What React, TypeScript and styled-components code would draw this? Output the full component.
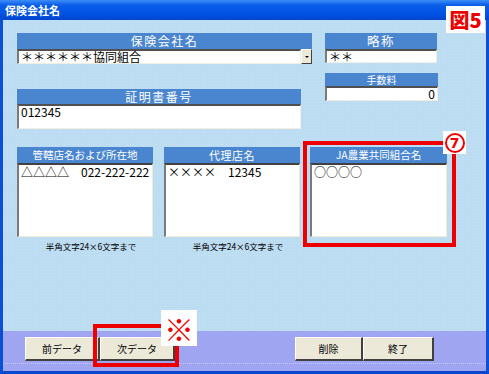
import styled, { createGlobalStyle } from 'styled-components';

const GlobalStyle = createGlobalStyle`
  html, body {
    margin: 0;
    padding: 0;
    background: #ffffff;
  }
  * {
    box-sizing: border-box;
  }
`;

const FONT = `"MS UI Gothic", "Noto Sans CJK JP", "DejaVu Sans", sans-serif`;

const Window = styled.div`
  position: relative;
  width: 489px;
  height: 374px;
  display: flex;
  flex-direction: column;
  font-family: ${FONT};
  overflow: hidden;
`;

const TitleBar = styled.div`
  height: 20px;
  flex-shrink: 0;
  display: flex;
  align-items: center;
  padding-left: 5px;
  color: #ffffff;
  font-size: 11px;
  font-weight: 700;
  background: linear-gradient(#3d8ef8 0%, #0a5ee8 25%, #0052e4 70%, #0445cc 100%);
`;

const Frame = styled.div`
  flex: 1;
  display: flex;
  flex-direction: column;
  border-left: 3px solid #0b4fd6;
  border-right: 3px solid #0b4fd6;
  border-bottom: 3px solid #0b47cc;
`;

const FormArea = styled.div`
  flex: 1;
  padding: 13px 0 0 14px;
  background-color: #bcdcf2;
  background-image: radial-gradient(#c6e2f6 0.6px, transparent 0.7px);
  background-size: 3px 3px;
`;

const TopSection = styled.div`
  display: flex;
  align-items: flex-start;
`;

const Column = styled.div<{ $width: number; $ml?: number }>`
  width: ${(p) => p.$width}px;
  margin-left: ${(p) => p.$ml ?? 0}px;
  display: flex;
  flex-direction: column;
`;

const Field = styled.div<{ $width?: number; $mt?: number }>`
  width: ${(p) => (p.$width ? `${p.$width}px` : '100%')};
  margin-top: ${(p) => p.$mt ?? 0}px;
  display: flex;
  flex-direction: column;
`;

const Header = styled.div<{ $h: number; $size?: number; $spacing?: number }>`
  height: ${(p) => p.$h}px;
  flex-shrink: 0;
  background: #4a86d0;
  color: #ffffff;
  font-size: ${(p) => p.$size ?? 12}px;
  line-height: ${(p) => p.$h}px;
  text-align: center;
  letter-spacing: ${(p) => p.$spacing ?? 1.5}px;
  white-space: nowrap;
`;

const InputRow = styled.div`
  display: flex;
`;

const Input = styled.div<{ $h: number; $align?: string }>`
  flex: 1 1 auto;
  height: ${(p) => p.$h}px;
  background: #ffffff;
  border-top: 2px solid #505050;
  border-left: 2px solid #7a7a7a;
  border-right: 1px solid #f2efe2;
  border-bottom: 1px solid #f2efe2;
  color: #000000;
  font-size: 12px;
  line-height: 11px;
  padding: 0 2px;
  text-align: ${(p) => p.$align ?? 'left'};
  white-space: nowrap;
`;

const DropButton = styled.div`
  width: 11px;
  height: 15px;
  flex-shrink: 0;
  background: #ece9d8;
  border: 1px solid #404040;
  border-top-color: #ffffff;
  border-left-color: #ffffff;
  display: flex;
  align-items: center;
  justify-content: center;
  &::after {
    content: '';
    border-left: 2px solid transparent;
    border-right: 2px solid transparent;
    border-top: 2px solid #000000;
  }
`;

const BoxRow = styled.div`
  display: flex;
  margin-top: 18px;
  align-items: flex-start;
`;

const BoxColumn = styled.div<{ $width: number; $ml?: number }>`
  width: ${(p) => p.$width}px;
  margin-left: ${(p) => p.$ml ?? 0}px;
  display: flex;
  flex-direction: column;
`;

const TextBox = styled.div`
  height: 74px;
  flex-shrink: 0;
  background: #ffffff;
  border-top: 2px solid #404040;
  border-left: 2px solid #7a7a7a;
  border-right: 1px solid #f0ecd8;
  border-bottom: 1px solid #f0ecd8;
  font-size: 12px;
  line-height: 12px;
  padding: 1px 2px;
  white-space: pre;
  color: #000000;
`;

const Note = styled.div`
  margin-top: 3px;
  padding-left: 12px;
  text-align: center;
  font-size: 8.5px;
  color: #000000;
  white-space: nowrap;
`;

const ButtonBar = styled.div`
  height: 40px;
  flex-shrink: 0;
  background: #a0a5f2;
  display: flex;
  flex-direction: column;
`;

const ButtonStrip = styled.div`
  height: 33px;
  padding: 6px 0 0 22px;
  display: flex;
  border-bottom: 1px dotted #c4c8fa;
`;

const Button = styled.div<{ $width: number; $ml?: number }>`
  width: ${(p) => p.$width}px;
  margin-left: ${(p) => p.$ml ?? 0}px;
  height: 24px;
  background: #ece9d8;
  border-top: 1px solid #ffffff;
  border-left: 1px solid #ffffff;
  border-right: 2px solid #404040;
  border-bottom: 2px solid #404040;
  display: flex;
  align-items: center;
  justify-content: center;
  font-size: 10px;
  color: #000000;
`;

const RedFrame = styled.div<{ $x: number; $y: number; $w: number; $h: number }>`
  position: absolute;
  left: ${(p) => p.$x}px;
  top: ${(p) => p.$y}px;
  width: ${(p) => p.$w}px;
  height: ${(p) => p.$h}px;
  border: 4px solid #ee0000;
  pointer-events: none;
`;

const Label = styled.div<{ $x: number; $y: number; $w: number; $h: number; $size: number }>`
  position: absolute;
  left: ${(p) => p.$x}px;
  top: ${(p) => p.$y}px;
  width: ${(p) => p.$w}px;
  height: ${(p) => p.$h}px;
  background: #ffffff;
  color: #ee0000;
  font-family: "Noto Sans CJK JP", "DejaVu Sans", sans-serif;
  font-weight: 900;
  font-size: ${(p) => p.$size}px;
  display: flex;
  align-items: center;
  justify-content: center;
  line-height: 1;
`;

const Circled = styled.div`
  width: 20px;
  height: 20px;
  border: 2px solid #ee0000;
  border-radius: 50%;
  font-family: "DejaVu Sans", sans-serif;
  font-size: 14px;
  font-weight: 700;
  display: flex;
  align-items: center;
  justify-content: center;
`;

export default function App() {
  return (
    <>
      <GlobalStyle />
      <Window>
        <TitleBar>保険会社名</TitleBar>
        <Frame>
          <FormArea>
            <TopSection>
              <Column $width={295}>
                <Field>
                  <Header $h={16}>保険会社名</Header>
                  <InputRow>
                    <Input $h={15}>＊＊＊＊＊＊協同組合</Input>
                    <DropButton />
                  </InputRow>
                </Field>
                <Field $width={284} $mt={25}>
                  <Header $h={15}>証明書番号</Header>
                  <Input $h={25}>012345</Input>
                </Field>
              </Column>
              <Column $width={113} $ml={13}>
                <Field $width={112}>
                  <Header $h={16} $size={12.5}>略称</Header>
                  <Input $h={14}>＊＊</Input>
                </Field>
                <Field $mt={10}>
                  <Header $h={13} $size={10} $spacing={0}>手数料</Header>
                  <Input $h={15} $align="right">0</Input>
                </Field>
              </Column>
            </TopSection>
            <BoxRow>
              <BoxColumn $width={136}>
                <Header $h={16} $size={10.5} $spacing={0}>管轄店名および所在地</Header>
                <TextBox>{'△△△△　022-222-222'}</TextBox>
                <Note>半角文字24×6文字まで</Note>
              </BoxColumn>
              <BoxColumn $width={136} $ml={11}>
                <Header $h={16} $size={11} $spacing={0.5}>代理店名</Header>
                <TextBox>{'××××　12345'}</TextBox>
                <Note>半角文字24×6文字まで</Note>
              </BoxColumn>
              <BoxColumn $width={137} $ml={10}>
                <Header $h={16} $size={10.5} $spacing={0}>JA農業共同組合名</Header>
                <TextBox>○○○○</TextBox>
              </BoxColumn>
            </BoxRow>
          </FormArea>
          <ButtonBar>
            <ButtonStrip>
              <Button $width={75}>前データ</Button>
              <Button $width={75}>次データ</Button>
              <Button $width={68} $ml={120}>削除</Button>
              <Button $width={71}>終了</Button>
            </ButtonStrip>
          </ButtonBar>
        </Frame>

        <RedFrame $x={303} $y={141} $w={153} $h={106} />
        <Label $x={443} $y={131} $w={23} $h={23} $size={14}>
          <Circled>7</Circled>
        </Label>
        <Label $x={446} $y={6} $w={39} $h={27} $size={20}>図5</Label>
        <RedFrame $x={93} $y={324} $w={86} $h={43} />
        <Label $x={161} $y={310} $w={36} $h={36} $size={30}>※</Label>
      </Window>
    </>
  );
}
